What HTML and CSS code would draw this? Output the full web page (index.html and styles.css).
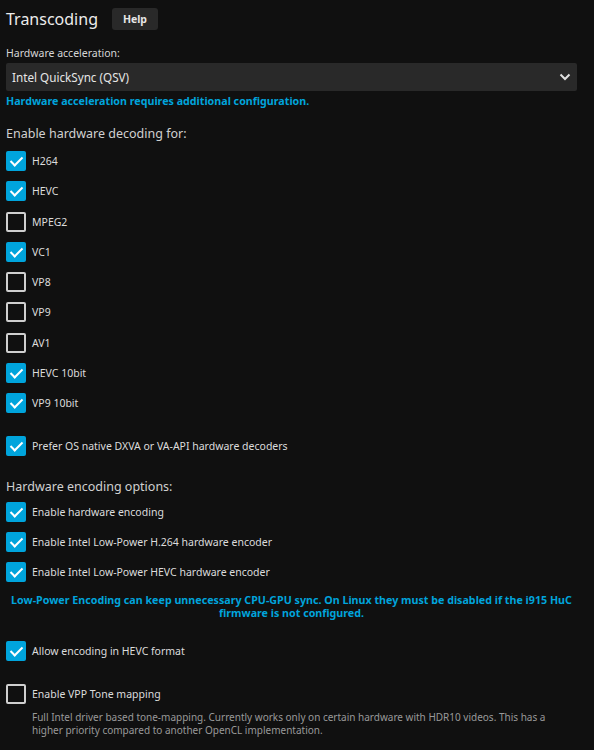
FILE: index.html
```html
<!DOCTYPE html>
<html>
<head>
<meta charset="utf-8">
<link rel="stylesheet" href="styles.css">
</head>
<body>
<div class="page">
  <div class="header">
    <h2 class="title">Transcoding</h2>
    <button class="help">Help</button>
  </div>

  <div class="field">
    <div class="field-label">Hardware acceleration:</div>
    <div class="select">
      <span>Intel QuickSync (QSV)</span>
      <svg class="chevron" width="12" height="8" viewBox="0 0 12 8"><path d="M1.5 1.5 L6 6 L10.5 1.5" fill="none" stroke="#e0e0e0" stroke-width="2"/></svg>
    </div>
    <div class="note">Hardware acceleration requires additional configuration.</div>
  </div>

  <h3 class="section">Enable hardware decoding for:</h3>
  <div class="list">
    <div class="row"><span class="box on"></span><span class="lbl">H264</span></div>
    <div class="row"><span class="box on"></span><span class="lbl">HEVC</span></div>
    <div class="row"><span class="box"></span><span class="lbl">MPEG2</span></div>
    <div class="row"><span class="box on"></span><span class="lbl">VC1</span></div>
    <div class="row"><span class="box"></span><span class="lbl">VP8</span></div>
    <div class="row"><span class="box"></span><span class="lbl">VP9</span></div>
    <div class="row"><span class="box"></span><span class="lbl">AV1</span></div>
    <div class="row"><span class="box on"></span><span class="lbl">HEVC 10bit</span></div>
    <div class="row"><span class="box on"></span><span class="lbl">VP9 10bit</span></div>
  </div>

  <div class="list gap-top">
    <div class="row"><span class="box on"></span><span class="lbl">Prefer OS native DXVA or VA-API hardware decoders</span></div>
  </div>

  <h3 class="section enc">Hardware encoding options:</h3>
  <div class="list">
    <div class="row"><span class="box on"></span><span class="lbl">Enable hardware encoding</span></div>
    <div class="row"><span class="box on"></span><span class="lbl">Enable Intel Low-Power H.264 hardware encoder</span></div>
    <div class="row"><span class="box on"></span><span class="lbl">Enable Intel Low-Power HEVC hardware encoder</span></div>
  </div>
  <div class="note center">Low-Power Encoding can keep unnecessary CPU-GPU sync. On Linux they must be disabled if the i915 HuC firmware is not configured.</div>

  <div class="list gap-top2">
    <div class="row"><span class="box on"></span><span class="lbl">Allow encoding in HEVC format</span></div>
  </div>

  <div class="list gap-top3">
    <div class="row"><span class="box"></span><span class="lbl">Enable VPP Tone mapping</span></div>
    <div class="desc">Full Intel driver based tone-mapping. Currently works only on certain hardware with HDR10 videos. This has a higher priority compared to another OpenCL implementation.</div>
  </div>
</div>
</body>
</html>
```

FILE: styles.css
```css
html, body {
  margin: 0;
  padding: 0;
  background: #101010;
}
body {
  font-family: "Noto Sans", "Open Sans", sans-serif;
  color: #e0e0e0;
}
.page {
  padding: 8px 17px 0 6px;
  display: flex;
  flex-direction: column;
}
.header {
  display: flex;
  align-items: center;
  gap: 14px;
  height: 22px;
}
.title {
  margin: 0;
  font-size: 16px;
  font-weight: 400;
  line-height: 22px;
  color: #ececec;
}
.help {
  width: 46px;
  height: 22px;
  border: 0;
  border-radius: 3px;
  background: #292929;
  color: #e6e6e6;
  font-family: inherit;
  font-size: 10.5px;
  font-weight: 700;
  padding: 0;
}
.field {
  margin-top: 16px;
  display: flex;
  flex-direction: column;
}
.field-label {
  font-size: 10.5px;
  line-height: 14px;
  color: #d6d6d6;
}
.select {
  margin-top: 3px;
  height: 28px;
  background: #292929;
  border-radius: 2px;
  display: flex;
  align-items: center;
  justify-content: space-between;
  padding: 0 6px 0 6px;
  font-size: 11.7px;
  color: #e6e6e6;
}
.note {
  margin-top: 3px;
  font-size: 10.7px;
  line-height: 14px;
  font-weight: 700;
  color: #00a4dc;
}
.note.center {
  text-align: center;
  margin-top: 7px;
  line-height: 13px;
}
.section {
  margin: 17px 0 3px;
  font-size: 12.5px;
  line-height: 18px;
  font-weight: 400;
  color: #d0d0d0;
}
.section.enc {
  margin-top: 16px;
  margin-bottom: 1px;
}
.list {
  display: flex;
  flex-direction: column;
}
.gap-top { margin-top: 13px; }
.gap-top2 { margin-top: 16px; }
.gap-top3 { margin-top: 12px; }
.row {
  display: flex;
  align-items: center;
  height: 30.25px;
  gap: 6px;
}
.box {
  width: 20px;
  height: 20px;
  box-sizing: border-box;
  border: 2px solid #cfcfcf;
  border-radius: 2px;
  position: relative;
  flex: none;
}
.box.on {
  border: 0;
  background: #00a4dc;
}
.box.on::after {
  content: "";
  position: absolute;
  left: 7px;
  top: 3px;
  width: 5px;
  height: 10px;
  border-right: 2px solid #fff;
  border-bottom: 2px solid #fff;
  transform: rotate(45deg);
}
.lbl {
  font-size: 10.5px;
  color: #dcdcdc;
}
.desc {
  margin-left: 26px;
  margin-top: 2px;
  font-size: 10px;
  line-height: 13.5px;
  color: #999;
}
```
